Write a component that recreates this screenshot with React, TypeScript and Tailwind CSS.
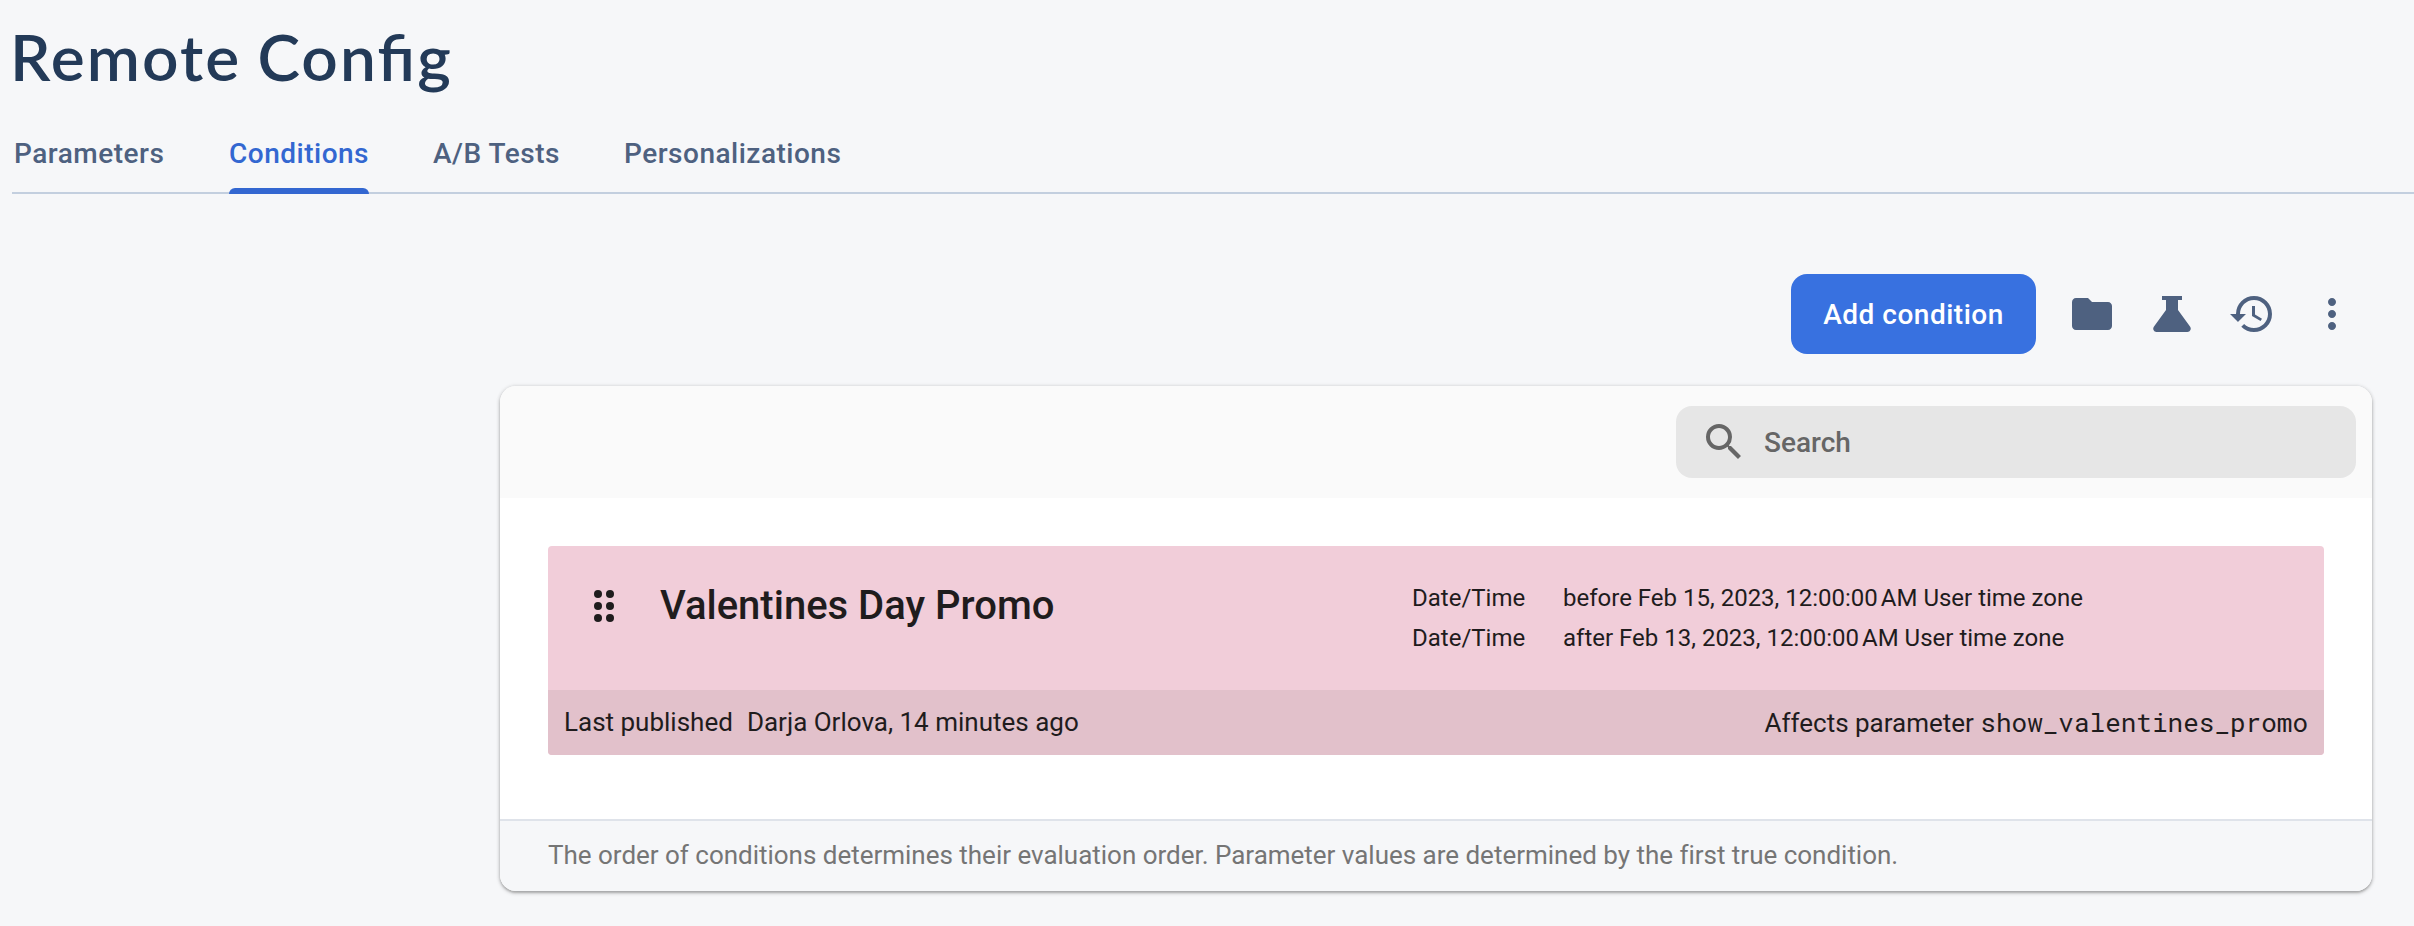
import React from "react";

const tabs = [
  { label: "Parameters", cls: "w-[150px] mr-[65px]" },
  { label: "Conditions", active: true, cls: "w-[140px] mr-[64px]" },
  { label: "A/B Tests", cls: "w-[127px] mr-[64px]" },
  { label: "Personalizations", cls: "w-[218px]" },
];

const rules = [
  "before Feb 15, 2023, 12:00:00\u202fAM User time zone",
  "after Feb 13, 2023, 12:00:00\u202fAM User time zone",
];

function Icon({ d }: { d: string }) {
  return (
    <svg viewBox="0 0 24 24" className="size-12 shrink-0 fill-[#4e6180]">
      <path d={d} />
    </svg>
  );
}

export default function App() {
  return (
    <div className="flex h-[926px] w-[2414px] flex-col overflow-hidden bg-[#f6f7f9] font-[Roboto,sans-serif]">
      <header className="pl-3">
        <h1 className="-ml-0.5 h-[120px] whitespace-nowrap pt-[15px] font-[Lato,sans-serif] text-[64px] font-semibold leading-[84px] tracking-[2.1px] [word-spacing:-2px] text-[#233a58] [font-feature-settings:'liga']">
          Remote Config
        </h1>
        <nav className="flex h-[74px] border-b-2 border-[#c3cfdf] pl-0.5 text-[28px] font-medium tracking-[0.5px]">
          {tabs.map((t) => (
            <div key={t.label} className={`flex h-[74px] flex-col justify-between whitespace-nowrap ${t.cls}`}>
              <span className={`pt-[13px] leading-[41px] ${t.active ? "text-[#3367d1]" : "text-[#4e6180]"}`}>{t.label}</span>
              {t.active && <span className="h-1.5 rounded-t-[6px] bg-[#3367d1]" />}
            </div>
          ))}
        </nav>
      </header>

      <div className="mt-20 flex h-20 items-center justify-end pr-[58px]">
        <button className="mr-8 h-20 w-[245px] whitespace-nowrap rounded-2xl bg-[#3871e0] pt-px text-[28px] font-medium leading-[43px] tracking-[0.5px] text-white">
          Add condition
        </button>
        <div className="flex gap-8">
          <Icon d="M10 4H4c-1.1 0-1.99.9-1.99 2L2 18c0 1.1.9 2 2 2h16c1.1 0 2-.9 2-2V8c0-1.1-.9-2-2-2h-8l-2-2z" />
          <Icon d="M7 3h10v2h-2v5l6 8.300c.9 1.200.1 2.700-1.300 2.700H4.300c-1.400 0-2.200-1.500-1.300-2.700L9 10V5H7z" />
          <Icon d="M13 3a9 9 0 0 0-9 9H1l3.890 3.890.070.140L9 12H6c0-3.870 3.130-7 7-7s7 3.130 7 7-3.130 7-7 7c-1.930 0-3.680-.790-4.940-2.060l-1.420 1.420A8.954 8.954 0 0 0 13 21a9 9 0 0 0 0-18zm-1 5v5l4.280 2.540.720-1.210-3.500-2.080V8H12z" />
          <Icon d="M12 8c1.100 0 2-.900 2-2s-.900-2-2-2-2 .900-2 2 .900 2 2 2zm0 2c-1.100 0-2 .900-2 2s.900 2 2 2 2-.900 2-2-.900-2-2-2zm0 6c-1.100 0-2 .900-2 2s.900 2 2 2 2-.900 2-2-.900-2-2-2z" />
        </div>
      </div>

      <section className="ml-[500px] mt-8 flex h-[505px] w-[1872px] flex-col overflow-hidden rounded-2xl bg-white shadow-[0_2px_2px_rgba(0,0,0,0.14),0_0_4px_rgba(0,0,0,0.12),0_2px_4px_rgba(0,0,0,0.2)]">
        <div className="flex h-28 items-center justify-end bg-[#fafafa] pr-4">
          <div className="flex h-[72px] w-[680px] items-center rounded-2xl bg-[#e6e6e6] pl-6">
            <svg viewBox="0 0 24 24" className="size-12 fill-[#666]">
              <path d="M15.500 14h-.790l-.280-.270A6.471 6.471 0 0 0 16 9.500 6.500 6.500 0 1 0 9.500 16c1.610 0 3.090-.590 4.230-1.570l.270.280v.790l5 4.990L20.490 19l-4.990-5zm-6 0C7.010 14 5 11.990 5 9.500S7.010 5 9.500 5 14 7.010 14 9.500 11.990 14 9.500 14z" />
            </svg>
            <span className="ml-4 pt-px text-[28px] font-medium leading-[43px] text-[#666]">Search</span>
          </div>
        </div>
        <div className="h-[321px] px-12 pt-12">
          <div className="overflow-hidden rounded-[4px] bg-[#f1cdd9] text-[#1f1c1d]">
            <div className="flex h-36">
              <svg viewBox="0 0 20 36" className="ml-[46px] mt-[42px] h-9 w-5 fill-current">
                {[6, 18, 30].map((y) => (
                  <g key={y}>
                    <circle cx="4" cy={y} r="4" />
                    <circle cx="16" cy={y} r="4" />
                  </g>
                ))}
              </svg>
              <h2 className="ml-[46px] mt-[36px] w-[752px] whitespace-nowrap text-[40px] font-medium leading-[48px]">
                Valentines Day Promo
              </h2>
              <dl className="mt-8 grid h-20 grid-cols-[151px_auto] whitespace-nowrap text-2xl leading-10">
                {rules.map((r) => (
                  <React.Fragment key={r}>
                    <dt>Date/Time</dt>
                    <dd>{r}</dd>
                  </React.Fragment>
                ))}
              </dl>
            </div>
            <div className="flex h-[65px] items-center justify-between bg-[#e2c1cb] px-4 text-[26px]">
              <p className="flex gap-3.5">
                <span>Last published</span>
                <span>Darja Orlova, 14 minutes ago</span>
              </p>
              <p>
                Affects parameter <span className="font-['Roboto_Mono','Liberation_Mono',monospace]">show_valentines_promo</span>
              </p>
            </div>
          </div>
        </div>
        <footer className="h-[72px] border-t-2 border-[#dfe3ea] bg-[#f6f7f9] pl-12 text-[26px] leading-[68px] tracking-[-0.015px] text-[#757575]">
          The order of conditions determines their evaluation order. Parameter values are determined by the first true condition.
        </footer>
      </section>
    </div>
  );
}
